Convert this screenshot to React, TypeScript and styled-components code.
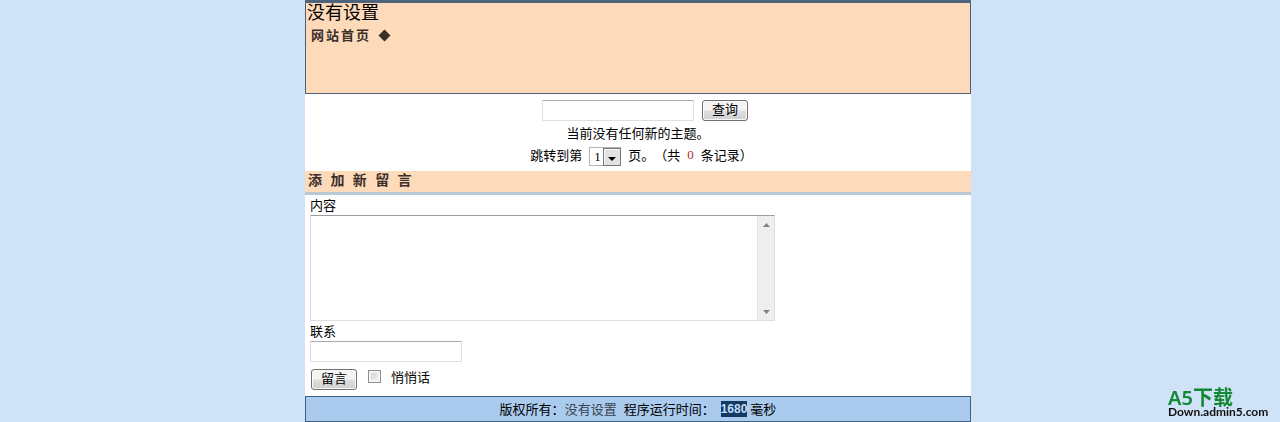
import React from "react";
import styled, { createGlobalStyle } from "styled-components";

const GlobalStyle = createGlobalStyle`
  * { box-sizing: border-box; }
  body {
    margin: 0;
    background: #d0e2f8;
    color: #000;
    font: 13px/16px "Noto Sans CJK SC", sans-serif;
    text-spacing-trim: space-all;
  }
`;

const Page = styled.div`
  padding-right: 4px;
`;

const Sheet = styled.div`
  max-width: 666px;
  margin: 0 auto;
  background: #fff;
`;

const Header = styled.header`
  min-height: 94px;
  padding: 0 1px;
  background: #fddaba;
  border: 1px solid #4e5f70;
  border-top: 3px solid #4d647c;
`;

const SiteTitle = styled.h1`
  margin: 0;
  font-size: 18px;
  line-height: 16px;
  font-weight: 400;
`;

const Nav = styled.nav`
  display: flex;
  gap: 7px;
  padding: 7px 4px;
  color: #3b2f2a;
  line-height: 18px;
  font-weight: 700;
`;

const NavLink = styled.a`
  color: inherit;
  text-decoration: none;
  letter-spacing: 2px;
`;

const Diamond = styled.svg`
  width: 13px;
  height: 18px;
  fill: currentColor;
`;

const Listing = styled.main`
  display: flex;
  flex-direction: column;
  align-items: center;
  gap: 4px;
  padding: 6px 0 5px;
`;

const Row = styled.form<{ $gap: number; $indent?: number }>`
  display: flex;
  align-items: flex-start;
  gap: ${(p) => p.$gap}px;
  padding-left: ${(p) => p.$indent ?? 0}px;
`;

const Message = styled.p`
  margin: 0;
  padding-bottom: 2px;
`;

const TextInput = styled.input`
  display: block;
  width: 152px;
  height: 21px;
  padding: 1px 3px;
  border: 1px solid #dcdee2;
  border-top-color: #a9abb0;
  border-radius: 1px;
  background: #fff;
  font: inherit;
`;

const Button = styled.button`
  width: 46px;
  height: 21px;
  padding: 0 0 3px;
  border: 1px solid #707070;
  border-radius: 3px;
  background: linear-gradient(#f4f4f4 0 45%, #dedede 55%, #cfcfcf);
  box-shadow: inset 0 0 0 1px #fafafa;
  color: #000;
  font: inherit;
`;

const PageSelect = styled.span`
  position: relative;
  display: block;
  width: 32px;
  height: 19px;
`;

const Select = styled.select`
  width: 100%;
  height: 100%;
  padding: 0 0 0 4px;
  border: 1px solid #b4b4b4;
  border-radius: 0;
  appearance: none;
  background: #fff;
  color: #000;
  font: 13px/16px "Liberation Serif", serif;
`;

const SelectArrow = styled.svg`
  position: absolute;
  top: 1px;
  right: 0;
  width: 18px;
  height: 18px;
  pointer-events: none;
`;

const Count = styled.span`
  color: #b3261e;
  font-family: "Liberation Serif", serif;
`;

const SectionTitle = styled.h2`
  margin: 0;
  padding: 1px 3px 2px;
  background: #fddaba;
  border-bottom: 3px solid #b9c8d3;
  color: #3b2f2a;
  font: 700 14px/18px "Liberation Mono", "Noto Sans CJK SC", monospace;
`;

const MessageForm = styled.form`
  display: flex;
  flex-direction: column;
  align-items: flex-start;
  padding: 2px 5px 6px;
`;

const FieldLabel = styled.label`
  padding-bottom: 2px;
`;

const TextBox = styled.div`
  display: flex;
  width: 465px;
  max-width: 100%;
  height: 106px;
  margin-bottom: 2px;
  border: 1px solid #dcdee2;
  border-top-color: #9c9ea2;
`;

const TextArea = styled.textarea`
  flex: 1;
  min-width: 0;
  padding: 2px;
  border: 0;
  outline: 0;
  resize: none;
  background: #fff;
  font: inherit;
`;

const ScrollRail = styled.div`
  display: flex;
  flex-direction: column;
  justify-content: space-between;
  align-items: center;
  width: 17px;
  padding: 7px 0 6px;
  border-left: 1px solid #e2e2e2;
  background: #eee;
`;

const ScrollArrow = styled.svg`
  width: 7px;
  height: 4px;
  fill: #808080;
`;

const Actions = styled.div`
  display: flex;
  align-items: flex-start;
  gap: 11px;
  margin-top: 7px;
  padding-left: 1px;
`;

const Whisper = styled.label`
  display: flex;
  gap: 10px;
`;

const Checkbox = styled.input`
  appearance: none;
  width: 13px;
  height: 13px;
  margin: 1px 0 0;
  border: 1px solid #8e8f8f;
  background: linear-gradient(135deg, #c9cdd2, #f6f6f6);
  box-shadow: inset 0 0 0 2px #f4f4f4;
`;

const Footer = styled.footer`
  display: flex;
  justify-content: center;
  padding: 4px 0;
  border: 1px solid #3f5f80;
  background: #aacbee;
`;

const OwnerLink = styled.a`
  margin-right: 7px;
  color: #37424d;
  text-decoration: none;
`;

const Elapsed = styled.mark`
  margin: 0 3px 0 6px;
  background: #123a63;
  color: #c5dcf5;
  font: 700 12px/16px "Liberation Sans", sans-serif;
`;

const Watermark = styled.div`
  position: fixed;
  right: 11px;
  bottom: 4px;
  width: 101px;
  font-family: "Noto Sans", "Noto Sans CJK SC", sans-serif;
`;

const WatermarkName = styled.div`
  color: #128a35;
  font-size: 20px;
  line-height: 16px;
  font-weight: 600;
  white-space: nowrap;
`;

const WatermarkSite = styled.div`
  color: #111;
  font: 700 12px/12px Lato, sans-serif;
  white-space: nowrap;
`;

export default function App() {
  return (
    <>
      <GlobalStyle />
      <Page>
        <Sheet>
          <Header>
            <SiteTitle>没有设置</SiteTitle>
            <Nav>
              <NavLink href="#">网站首页</NavLink>
              <Diamond viewBox="0 0 13 18" aria-hidden="true">
                <path d="M6.5 3.5 12.5 9.5 6.5 15.5 0.5 9.5Z" />
              </Diamond>
            </Nav>
          </Header>
          <Listing>
            <Row $gap={8} $indent={14}>
              <TextInput type="text" aria-label="查询" />
              <Button type="button">查询</Button>
            </Row>
            <Message>当前没有任何新的主题。</Message>
            <Row $gap={7} $indent={7}>
              <label htmlFor="page">跳转到第</label>
              <PageSelect>
                <Select id="page">
                  <option>1</option>
                </Select>
                <SelectArrow viewBox="0 0 18 18" aria-hidden="true">
                  <rect x="0.5" y="0.5" width="17" height="17" fill="#e2e2e2" stroke="#777" />
                  <path d="M1.5 16.5v-15h15" fill="none" stroke="#fafafa" />
                  <path d="M5 9h8l-4 4Z" fill="#000" />
                </SelectArrow>
              </PageSelect>
              <span>页。（共</span>
              <Count>0</Count>
              <span>条记录）</span>
            </Row>
          </Listing>
          <SectionTitle>添 加 新 留 言</SectionTitle>
          <MessageForm>
            <FieldLabel htmlFor="content">内容</FieldLabel>
            <TextBox>
              <TextArea id="content" />
              <ScrollRail aria-hidden="true">
                <ScrollArrow viewBox="0 0 7 4">
                  <path d="M3.5 0 7 4H0Z" />
                </ScrollArrow>
                <ScrollArrow viewBox="0 0 7 4">
                  <path d="M0 0h7L3.5 4Z" />
                </ScrollArrow>
              </ScrollRail>
            </TextBox>
            <FieldLabel htmlFor="contact">联系</FieldLabel>
            <TextInput id="contact" type="text" />
            <Actions>
              <Button type="button">留言</Button>
              <Whisper>
                <Checkbox type="checkbox" />
                悄悄话
              </Whisper>
            </Actions>
          </MessageForm>
          <Footer>
            <span>版权所有：</span>
            <OwnerLink href="#">没有设置</OwnerLink>
            <span>程序运行时间：</span>
            <Elapsed>1680</Elapsed>
            <span>毫秒</span>
          </Footer>
        </Sheet>
      </Page>
      <Watermark>
        <WatermarkName>A5下载</WatermarkName>
        <WatermarkSite>Down.admin5.com</WatermarkSite>
      </Watermark>
    </>
  );
}
